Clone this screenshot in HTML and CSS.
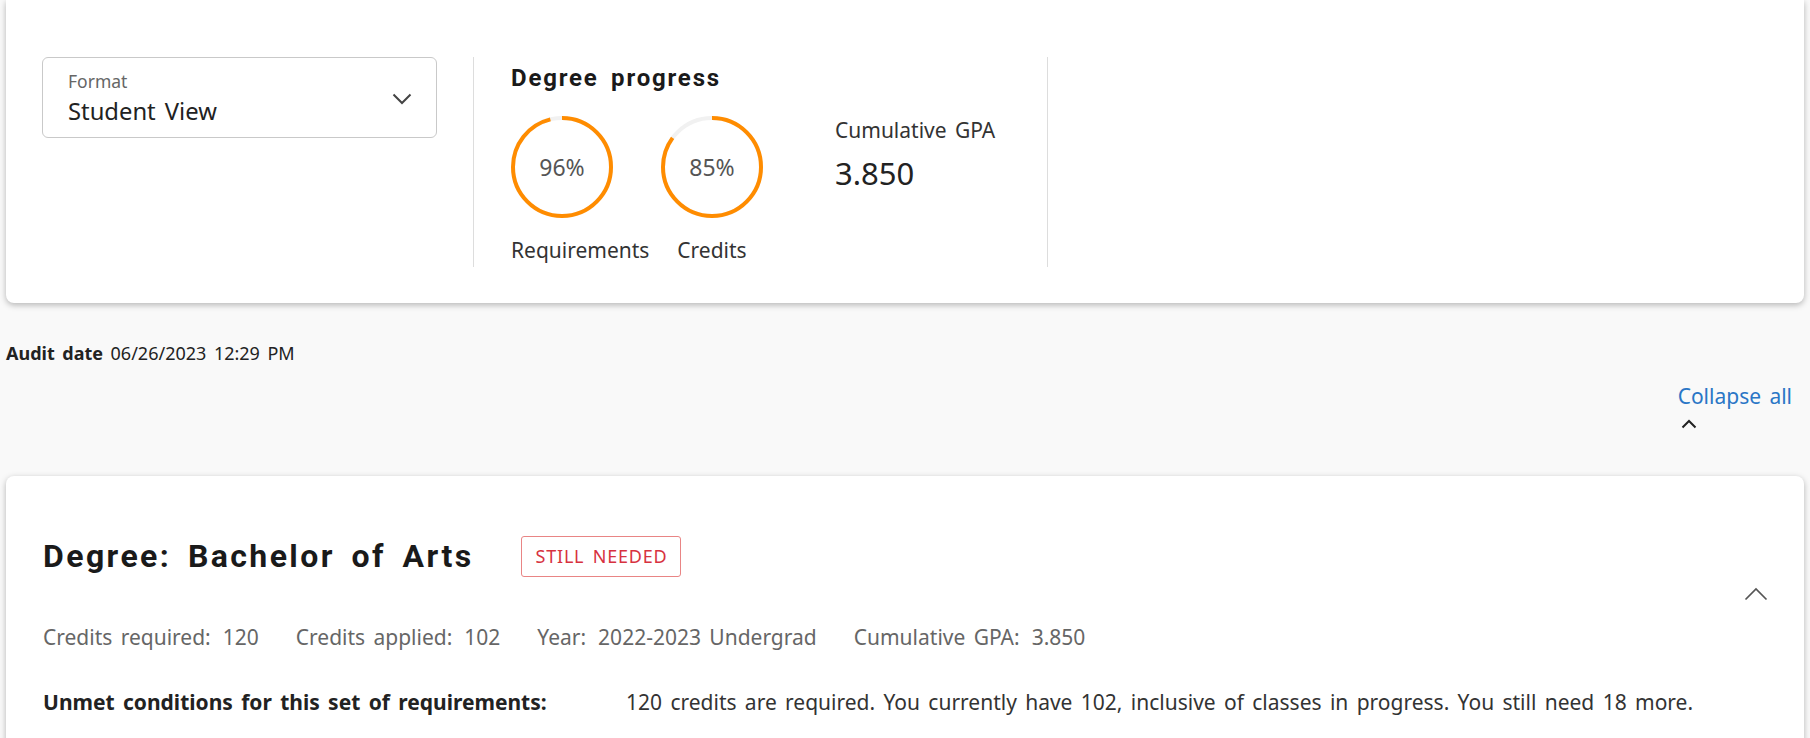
FILE: index.html
```html
<!DOCTYPE html>
<html lang="en">
<head>
  <meta charset="UTF-8">
  <title>Degree audit</title>
  <link rel="stylesheet" href="styles.css">
</head>
<body>

  <!-- summary card -->
  <div class="card summary">
    <div class="select">
      <div>
        <div class="select-label">Format</div>
        <div class="select-value">Student View</div>
      </div>
      <svg class="select-arrow" width="20" height="12" viewBox="0 0 20 12">
        <path d="M1.5 1.5 L10 10 L18.5 1.5" fill="none" stroke="#444" stroke-width="2"/>
      </svg>
    </div>

    <div class="progress">
      <h2>Degree progress</h2>
      <div class="rings">
        <div class="ring-item">
          <div class="ring">
            <svg width="102" height="102" viewBox="0 0 102 102">
              <circle cx="51" cy="51" r="49" fill="none" stroke="#f1f1f1" stroke-width="4"/>
              <circle cx="51" cy="51" r="49" fill="none" stroke="#ff8c00" stroke-width="4"
                      stroke-dasharray="295.6 400" transform="rotate(-90 51 51)"/>
            </svg>
            <span class="ring-text">96%</span>
          </div>
          <div class="ring-label">Requirements</div>
        </div>
        <div class="ring-item">
          <div class="ring">
            <svg width="102" height="102" viewBox="0 0 102 102">
              <circle cx="51" cy="51" r="49" fill="none" stroke="#f1f1f1" stroke-width="4"/>
              <circle cx="51" cy="51" r="49" fill="none" stroke="#ff8c00" stroke-width="4"
                      stroke-dasharray="261.7 400" transform="rotate(-90 51 51)"/>
            </svg>
            <span class="ring-text">85%</span>
          </div>
          <div class="ring-label">Credits</div>
        </div>
        <div class="gpa">
          <div class="gpa-label">Cumulative GPA</div>
          <div class="gpa-value">3.850</div>
        </div>
      </div>
    </div>
  </div>

  <div class="audit-date"><strong>Audit date</strong> 06/26/2023 12:29 PM</div>

  <div class="toolbar">
    <div class="collapse">
      <a href="#">Collapse all</a>
      <svg width="16" height="10" viewBox="0 0 16 10">
        <path d="M1.5 8.5 L8 2 L14.5 8.5" fill="none" stroke="#222" stroke-width="2"/>
      </svg>
    </div>
  </div>

  <!-- degree block -->
  <div class="card block">
    <div class="block-head">
      <div>
        <div class="title-row">
          <h1>Degree: Bachelor of Arts</h1>
          <span class="badge">STILL NEEDED</span>
        </div>
        <div class="facts">
          <div><span class="fact-label">Credits required:</span>120</div>
          <div><span class="fact-label">Credits applied:</span>102</div>
          <div><span class="fact-label">Year:</span>2022-2023 Undergrad</div>
          <div><span class="fact-label">Cumulative GPA:</span>3.850</div>
        </div>
      </div>
      <svg class="block-toggle" width="24" height="14" viewBox="0 0 24 14">
        <path d="M1.5 12.5 L12 2 L22.5 12.5" fill="none" stroke="#555" stroke-width="1.7"/>
      </svg>
    </div>

    <div class="unmet">
      <div class="unmet-label">Unmet conditions for this set of requirements:</div>
      <div>120 credits are required. You currently have 102, inclusive of classes in progress. You still need 18 more.</div>
    </div>
  </div>

</body>
</html>
```

FILE: styles.css
```css
body {
  font-family: 'Noto Sans', sans-serif;
  background: #f9f9f9;
  color: #222;
  margin: 0;
  padding: 0 6px;
  word-spacing: 0.18em;
}

.card {
  background: #fff;
  border-radius: 8px;
  box-shadow: 0 2px 6px rgba(0,0,0,0.28);
}

/* summary card */
.summary {
  border-radius: 0 0 8px 8px;
  padding: 57px 36px 36px;
  display: flex;
  align-items: flex-start;
}

.select {
  width: 395px;
  box-sizing: border-box;
  border: 1px solid #c9c9c9;
  border-radius: 6px;
  padding: 13px 24px 11px 25px;
  display: flex;
  justify-content: space-between;
  align-items: center;
}

.select-label {
  font-size: 17.5px;
  line-height: 20px;
  color: #666;
}

.select-value {
  font-size: 23.8px;
  line-height: 30px;
  margin-top: 5px;
  color: #222;
}

.progress {
  margin-left: 36px;
  width: 575px;
  box-sizing: border-box;
  border-left: 1px solid #ddd;
  border-right: 1px solid #ddd;
  padding: 7px 37px 3px;
}

h1, h2 {
  margin: 0;
  font-family: Roboto, 'Noto Sans', sans-serif;
  font-weight: 700;
  letter-spacing: 0.075em;
  word-spacing: 0.2em;
  color: #1a1a1a;
}

h2 {
  font-size: 24px;
  line-height: 28px;
}

.rings {
  display: flex;
  align-items: flex-start;
  margin-top: 24px;
}

.ring-item {
  width: 102px;
}

.ring-item + .ring-item {
  margin-left: 48px;
}

.ring {
  display: grid;
  place-items: center;
  width: 102px;
  height: 102px;
}

.ring > * {
  grid-area: 1 / 1;
}

.ring svg {
  display: block;
}

.ring-text {
  font-size: 23px;
  color: #555;
}

.ring-label {
  margin-top: 18px;
  font-size: 21px;
  line-height: 28px;
  white-space: nowrap;
  text-align: center;
  color: #333;
}

.gpa {
  margin-left: 72px;
}

.gpa-label {
  font-size: 21px;
  line-height: 28px;
  color: #333;
}

.gpa-value {
  margin-top: 9px;
  font-size: 31px;
  line-height: 40px;
  color: #222;
}

/* audit line */
.audit-date {
  margin-top: 38px;
  font-size: 18px;
  line-height: 24px;
  color: #222;
}

.toolbar {
  display: flex;
  justify-content: flex-end;
  margin: 17px 12px 47px 0;
}

.collapse {
  display: flex;
  flex-direction: column;
  align-items: flex-start;
}

.collapse a {
  font-size: 21px;
  line-height: 28px;
  color: #2a76c6;
  text-decoration: none;
}

.collapse svg {
  margin: 9px 0 0 3px;
}

/* degree block */
.block {
  padding: 60px 36px 60px 37px;
}

.block-head {
  display: flex;
  justify-content: space-between;
  align-items: center;
}

.title-row {
  display: flex;
  align-items: flex-start;
}

h1 {
  font-size: 32px;
  line-height: 40px;
}

.badge {
  margin-left: 48px;
  padding: 7px 13px;
  font-size: 18px;
  line-height: 25px;
  letter-spacing: 0.8px;
  color: #d7323f;
  border: 1px solid #e98585;
  border-radius: 3px;
}

.facts {
  display: flex;
  gap: 37px;
  margin-top: 46px;
  font-size: 21px;
  line-height: 28px;
  color: #666;
}

.fact-label {
  margin-right: 12px;
}

.block-toggle {
  display: block;
}

.unmet {
  display: grid;
  grid-template-columns: 583px 1fr;
  margin-top: 37px;
  font-size: 21px;
  line-height: 28px;
  color: #333;
}

.unmet-label {
  font-weight: 700;
  color: #222;
}
```
